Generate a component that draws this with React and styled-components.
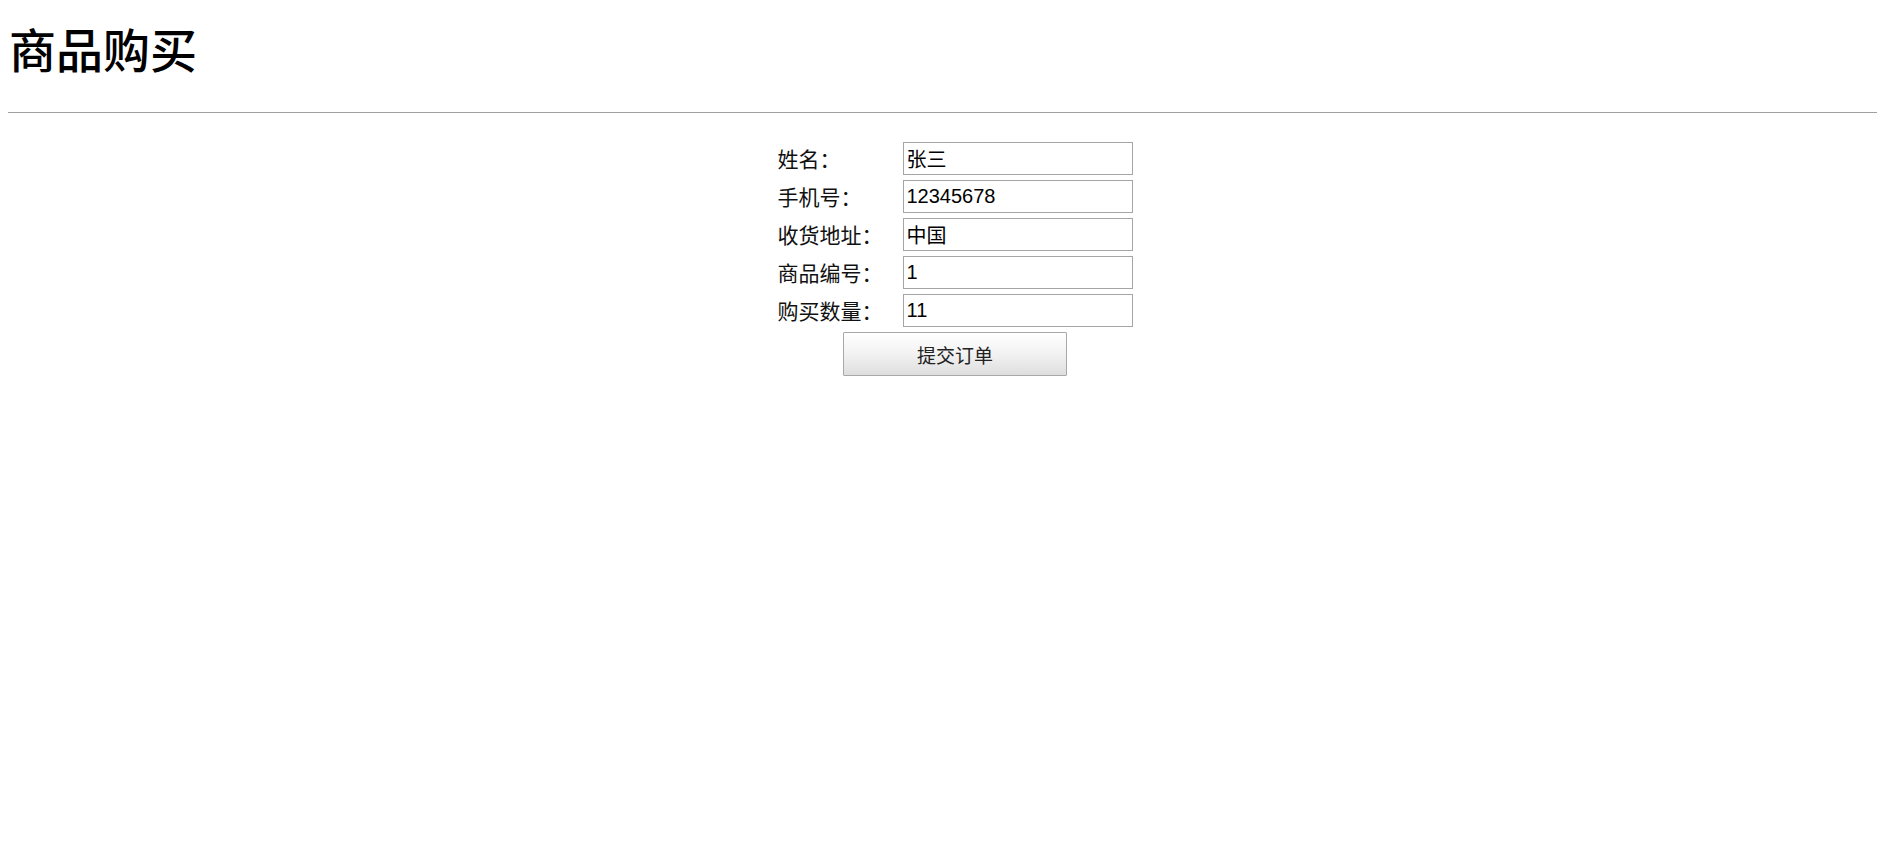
import React from "react";
import styled, { createGlobalStyle } from "styled-components";

const GlobalStyle = createGlobalStyle`
	body {
		margin: 8px;
		background: #fff;
		font-family: "Noto Sans CJK SC", "Liberation Serif", serif;
		color: #000;
	}
`;

const Title = styled.h1`
	margin: 10px 0 0 1px;
	font-size: 47px;
	line-height: 60px;
	font-weight: 500;
	font-family: "Noto Sans CJK SC", serif;
`;

const Rule = styled.div`
	margin: 34px -8px 0 -1px;
	border-top: 1px solid #a0a0a0;
`;

const Wrap = styled.div`
	display: flex;
	justify-content: center;
	padding: 29px 0 0 25px;
`;

const Form = styled.form`
	display: grid;
	grid-template-columns: 125px 230px;
	grid-template-rows: repeat(5, 33px) 44px;
	row-gap: 5px;
	align-items: center;
`;

const Label = styled.label`
	font-size: 21px;
	line-height: 33px;
	color: #111;
	font-family: "Noto Sans CJK SC", sans-serif;
`;

const Input = styled.input`
	box-sizing: border-box;
	width: 230px;
	height: 33px;
	margin: 0;
	padding: 0 3px;
	border: 1px solid #a5a5a5;
	font-family: "Liberation Sans", "Noto Sans CJK SC", sans-serif;
	font-size: 20px;
	color: #000;
	outline: none;
`;

const ButtonRow = styled.div`
	grid-column: 1 / 3;
	display: flex;
	justify-content: center;
`;

const Button = styled.button`
	box-sizing: border-box;
	width: 224px;
	height: 44px;
	margin: 0;
	border: 1px solid #a8a8a8;
	border-radius: 1px;
	background: linear-gradient(#ffffff, #f2f2f2 50%, #dedede);
	font-family: "Noto Sans CJK SC", serif;
	font-size: 19px;
	color: #222;
	cursor: pointer;
`;

const fields = [
	{ label: "姓名：", value: "张三" },
	{ label: "手机号：", value: "12345678" },
	{ label: "收货地址：", value: "中国" },
	{ label: "商品编号：", value: "1" },
	{ label: "购买数量：", value: "11" },
];

const App = () => {
	return (
		<>
			<GlobalStyle />
			<Title>商品购买</Title>
			<Rule />
			<Wrap>
				<Form onSubmit={(e) => e.preventDefault()}>
					{fields.map((f) => (
						<React.Fragment key={f.label}>
							<Label>{f.label}</Label>
							<Input defaultValue={f.value} />
						</React.Fragment>
					))}
					<ButtonRow>
						<Button type="submit">提交订单</Button>
					</ButtonRow>
				</Form>
			</Wrap>
		</>
	);
};

export default App;
